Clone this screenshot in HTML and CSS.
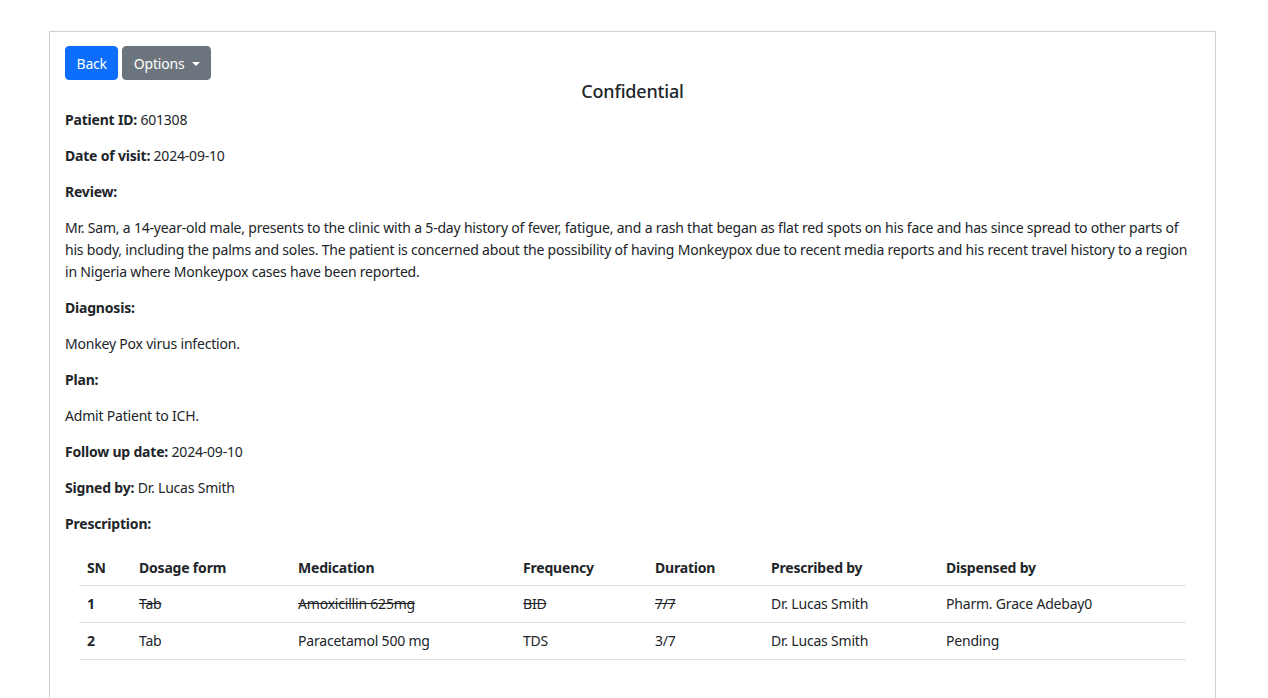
FILE: index.html
```html
<!DOCTYPE html>
<html>
<head>
<meta charset="utf-8">
<link rel="stylesheet" href="styles.css">
</head>
<body>
<div class="page">
  <div class="card">
    <div class="actions">
      <button class="btn btn-primary">Back</button>
      <button class="btn btn-secondary">Options <span class="caret"></span></button>
    </div>
    <h4 class="title">Confidential</h4>
    <p><b>Patient ID:</b> 601308</p>
    <p><b>Date of visit:</b> 2024-09-10</p>
    <p><b>Review:</b></p>
    <p>Mr. Sam, a 14-year-old male, presents to the clinic with a 5-day history of fever, fatigue, and a rash that began as flat red spots on his face and has since spread to other parts of his body, including the palms and soles. The patient is concerned about the possibility of having Monkeypox due to recent media reports and his recent travel history to a region in Nigeria where Monkeypox cases have been reported.</p>
    <p><b>Diagnosis:</b></p>
    <p>Monkey Pox virus infection.</p>
    <p><b>Plan:</b></p>
    <p>Admit Patient to ICH.</p>
    <p><b>Follow up date:</b> 2024-09-10</p>
    <p><b>Signed by:</b> Dr. Lucas Smith</p>
    <p><b>Prescription:</b></p>
    <table class="rx">
      <colgroup>
        <col class="c-sn"><col class="c-form"><col class="c-med"><col class="c-freq"><col class="c-dur"><col class="c-pres"><col class="c-disp">
      </colgroup>
      <thead>
        <tr><th>SN</th><th>Dosage form</th><th>Medication</th><th>Frequency</th><th>Duration</th><th>Prescribed by</th><th>Dispensed by</th></tr>
      </thead>
      <tbody>
        <tr><th>1</th><td><s>Tab</s></td><td><s>Amoxicillin 625mg</s></td><td><s>BID</s></td><td><s>7/7</s></td><td>Dr. Lucas Smith</td><td>Pharm. Grace Adebay0</td></tr>
        <tr><th>2</th><td>Tab</td><td>Paracetamol 500 mg</td><td>TDS</td><td>3/7</td><td>Dr. Lucas Smith</td><td>Pending</td></tr>
      </tbody>
    </table>
  </div>
</div>
</body>
</html>
```

FILE: styles.css
```css
* { box-sizing: border-box; }
html, body { margin: 0; padding: 0; background: #fff; }
body {
  font-family: "Noto Sans", "Open Sans", sans-serif;
  font-size: 14px;
  line-height: 22px;
  letter-spacing: -0.2px;
  color: #212529;
}
.page { padding: 31px 52px 0 49px; }
.card {
  border: 1px solid #d0d0d0;
  border-bottom: none;
  padding: 14px 15px 80px 15px;
  min-height: 700px;
}
.actions { display: flex; gap: 4px; }
.btn {
  font-family: inherit;
  font-size: 14px;
  letter-spacing: -0.2px;
  line-height: 20px;
  padding: 7px 10.5px 5px 10.5px;
  border-radius: 4px;
  border: 1px solid transparent;
  color: #fff;
  height: 34px;
  display: inline-flex;
  align-items: center;
  gap: 7px;
}
.btn-primary { background: #0d6efd; border-color: #0d6efd; }
.btn-secondary { background: #6c757d; border-color: #6c757d; }
.caret {
  display: inline-block;
  width: 0; height: 0;
  border-left: 4px solid transparent;
  border-right: 4px solid transparent;
  border-top: 4px solid #fff;
  margin-top: -1px;
}
.title {
  text-align: center;
  font-size: 18px;
  font-weight: 500;
  line-height: 24px;
  margin: -1px 0 6px 0;
}
p { margin: 0 0 14px 0; }
b { font-weight: 700; }
.rx {
  width: calc(100% - 28px);
  margin: 15px 14px 0 14px;
  border-collapse: collapse;
  table-layout: fixed;
}
.rx th, .rx td {
  text-align: left;
  padding: 7px 8px;
  border-bottom: 1px solid #dee2e6;
  font-size: 14px;
  line-height: 22px;
}
.rx thead th { padding-bottom: 6px; }
.rx th { font-weight: 700; }
.rx td { font-weight: 400; }
.c-sn { width: 52px; }
.c-form { width: 159px; }
.c-med { width: 225px; }
.c-freq { width: 132px; }
.c-dur { width: 116px; }
.c-pres { width: 175px; }
.c-disp { width: auto; }
```
